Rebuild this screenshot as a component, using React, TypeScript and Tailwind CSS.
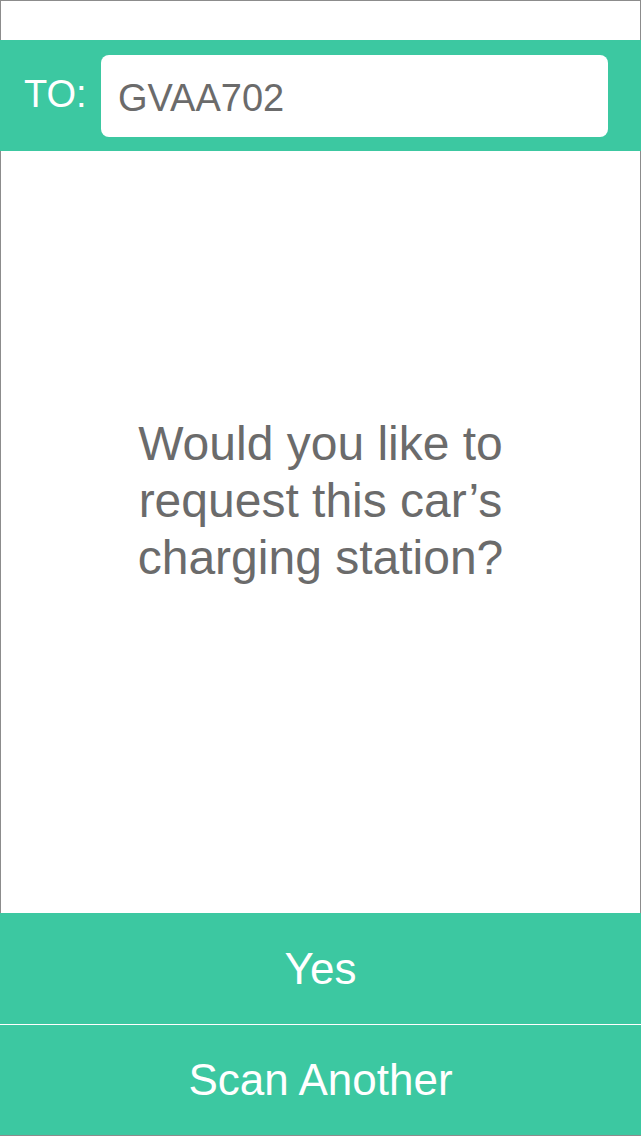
export default function App() {
  const font = { fontFamily: '"Liberation Sans", Arial, sans-serif' };

  return (
    <div
      className="w-[641px] h-[1136px] flex flex-col bg-white overflow-hidden"
      style={font}
    >
      {/* top spacer */}
      <div className="h-10 border-t border-x border-[#8c8c8c]" />

      {/* recipient header */}
      <div className="h-[111px] bg-[#3cc8a1] flex items-center pl-6 pr-[33px]">
        <span className="text-white text-[38px] leading-none w-[77px] pb-1">TO:</span>
        <div className="flex-1 h-[82px] bg-white rounded-lg flex items-center pl-[17px] pt-1">
          <span className="text-[#6b6b6b] text-[38px] leading-none">GVAA702</span>
        </div>
      </div>

      {/* question */}
      <div className="flex-1 border-x border-[#8c8c8c] flex items-center justify-center pb-16">
        <p className="text-center text-[#6b6b6b] text-[48px] leading-[57px]">
          Would you like to
          <br />
          request this car’s
          <br />
          charging station?
        </p>
      </div>

      {/* actions */}
      <button className="h-[111px] w-full bg-[#3cc8a1] text-white text-[44px] leading-none">
        Yes
      </button>
      <div className="h-px bg-white" />
      <button className="h-[111px] w-full bg-[#3cc8a1] text-white text-[44px] leading-none border-b border-[#8c8c8c]">
        Scan Another
      </button>
    </div>
  );
}
